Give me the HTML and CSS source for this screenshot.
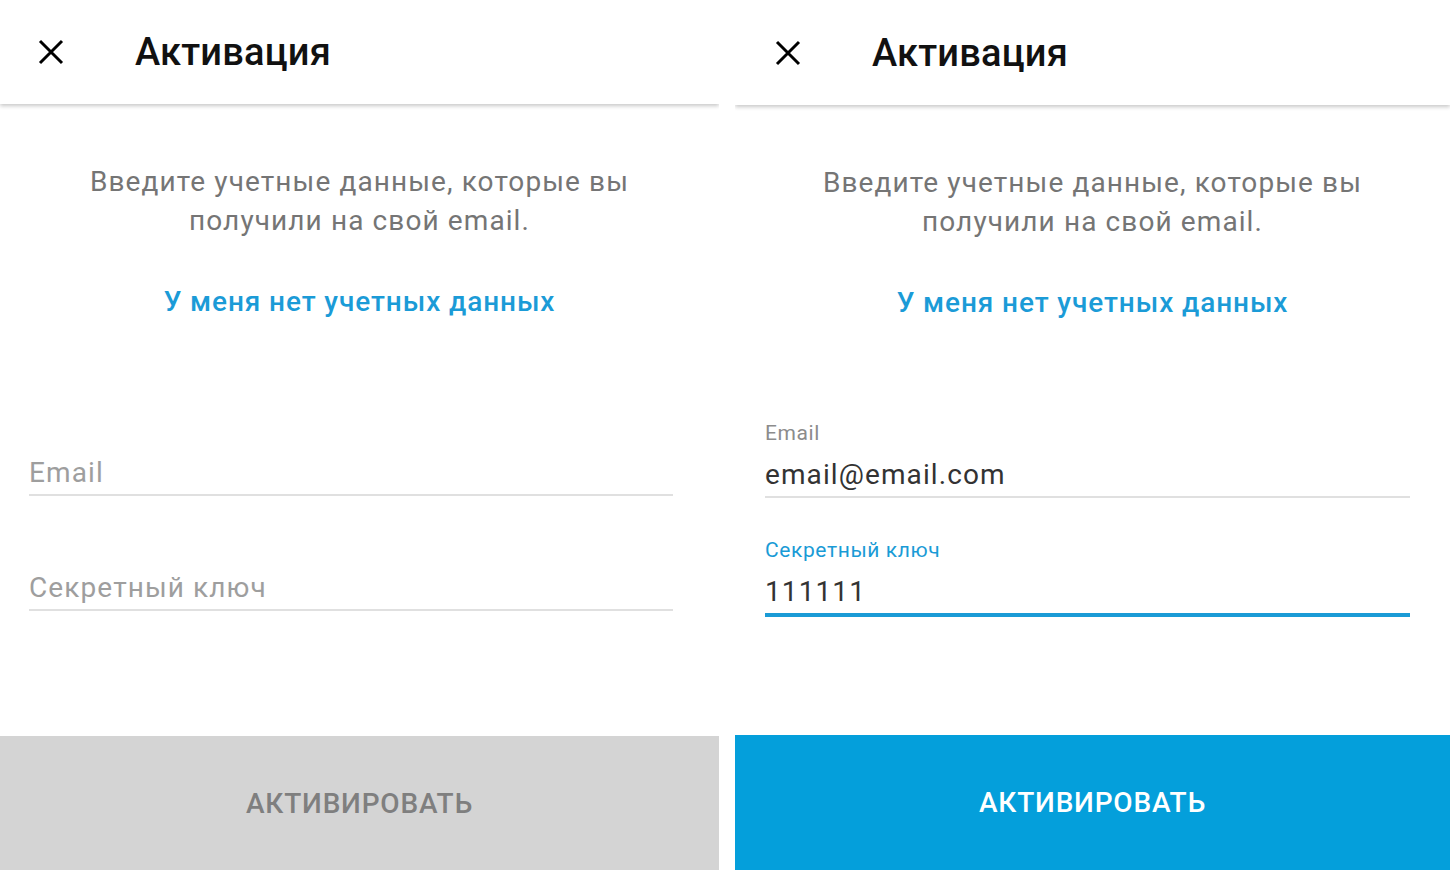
FILE: index.html
```html
<!DOCTYPE html>
<html lang="ru">
<head>
  <meta charset="UTF-8" />
  <meta name="viewport" content="width=device-width, initial-scale=1.0"/>
  <title>Активация</title>
  <link rel="stylesheet" href="styles.css">
</head>
<body>

  <!-- Empty state -->
  <div class="screen screen-empty">
    <header class="topbar">
      <svg class="close-icon" width="26" height="26" viewBox="0 0 26 26">
        <path d="M2 2 L24 24 M24 2 L2 24" stroke="#000" stroke-width="3" fill="none"/>
      </svg>
      <h1>Активация</h1>
    </header>

    <p class="intro">Введите учетные данные, которые вы<br>получили на свой email.</p>
    <a href="#" class="no-creds">У меня нет учетных данных</a>

    <div class="form">
      <div class="field">
        <label class="field-label"></label>
        <div class="field-input placeholder">Email</div>
      </div>
      <div class="field">
        <label class="field-label"></label>
        <div class="field-input placeholder">Секретный ключ</div>
      </div>
    </div>

    <button class="activate">Активировать</button>
  </div>

  <!-- Filled state -->
  <div class="screen screen-filled">
    <header class="topbar">
      <svg class="close-icon" width="26" height="26" viewBox="0 0 26 26">
        <path d="M2 2 L24 24 M24 2 L2 24" stroke="#000" stroke-width="3" fill="none"/>
      </svg>
      <h1>Активация</h1>
    </header>

    <p class="intro">Введите учетные данные, которые вы<br>получили на свой email.</p>
    <a href="#" class="no-creds">У меня нет учетных данных</a>

    <div class="form">
      <div class="field">
        <label class="field-label">Email</label>
        <div class="field-input">email@email.com</div>
      </div>
      <div class="field focused">
        <label class="field-label">Секретный ключ</label>
        <div class="field-input">111111</div>
      </div>
    </div>

    <button class="activate">Активировать</button>
  </div>

</body>
</html>
```

FILE: styles.css
```css
* {
  box-sizing: border-box;
}

body {
  margin: 0;
  padding: 0;
  background-color: #fff;
  font-family: Roboto, "Noto Sans", sans-serif;
  display: flex;
  gap: 16px;
  height: 870px;
  overflow: hidden;
}

.screen {
  display: flex;
  flex-direction: column;
  height: 870px;
  overflow: hidden;
  background-color: #fff;
}

.screen-empty {
  flex: 0 0 719px;
}

.screen-filled {
  flex: 1;
}

.topbar {
  height: 104px;
  display: flex;
  align-items: center;
  padding-left: 38px;
  background-color: #fff;
  box-shadow: 0 2px 4px rgba(0, 0, 0, 0.22);
  position: relative;
}

.screen-filled .topbar {
  height: 105px;
  padding-left: 40px;
}

.topbar h1 {
  margin: 0 0 0 71px;
  font-size: 38px;
  font-weight: 500;
  letter-spacing: 0.2px;
  color: #111;
}

.intro {
  margin: 58px 0 0;
  text-align: center;
  font-size: 28px;
  line-height: 39px;
  letter-spacing: 1.1px;
  color: #757575;
}

.no-creds {
  display: block;
  margin-top: 42px;
  text-align: center;
  font-size: 28px;
  line-height: 39px;
  font-weight: 500;
  letter-spacing: 0.9px;
  color: #1b9bd7;
  text-decoration: none;
}

.form {
  margin-top: 97px;
  padding: 0 46px 0 29px;
  display: flex;
  flex-direction: column;
  gap: 37px;
}

.screen-filled .form {
  padding: 0 40px 0 30px;
  margin-top: 98px;
  gap: 39px;
}

.field {
  border-bottom: 2px solid #e0e0e0;
  padding-bottom: 3px;
}

.field.focused {
  border-bottom: 4px solid #1a9bd6;
}

.field-label {
  display: block;
  height: 26px;
  margin-bottom: 11px;
  font-size: 21px;
  line-height: 26px;
  letter-spacing: 0.6px;
  color: #8c8c8c;
}

.field.focused .field-label {
  color: #1a9bd6;
}

.field-input {
  font-size: 28px;
  line-height: 36px;
  letter-spacing: 1.1px;
  color: #333;
}

.field-input.placeholder {
  color: #9e9e9e;
}

.activate {
  margin-top: auto;
  height: 134px;
  width: 100%;
  border: none;
  font-family: Roboto, "Noto Sans", sans-serif;
  font-size: 28px;
  font-weight: 500;
  letter-spacing: 0.8px;
  text-transform: uppercase;
  background-color: #d4d4d4;
  color: #7f7f7f;
}

.screen-filled .activate {
  height: 135px;
  background-color: #049fdb;
  color: #fff;
}
```
